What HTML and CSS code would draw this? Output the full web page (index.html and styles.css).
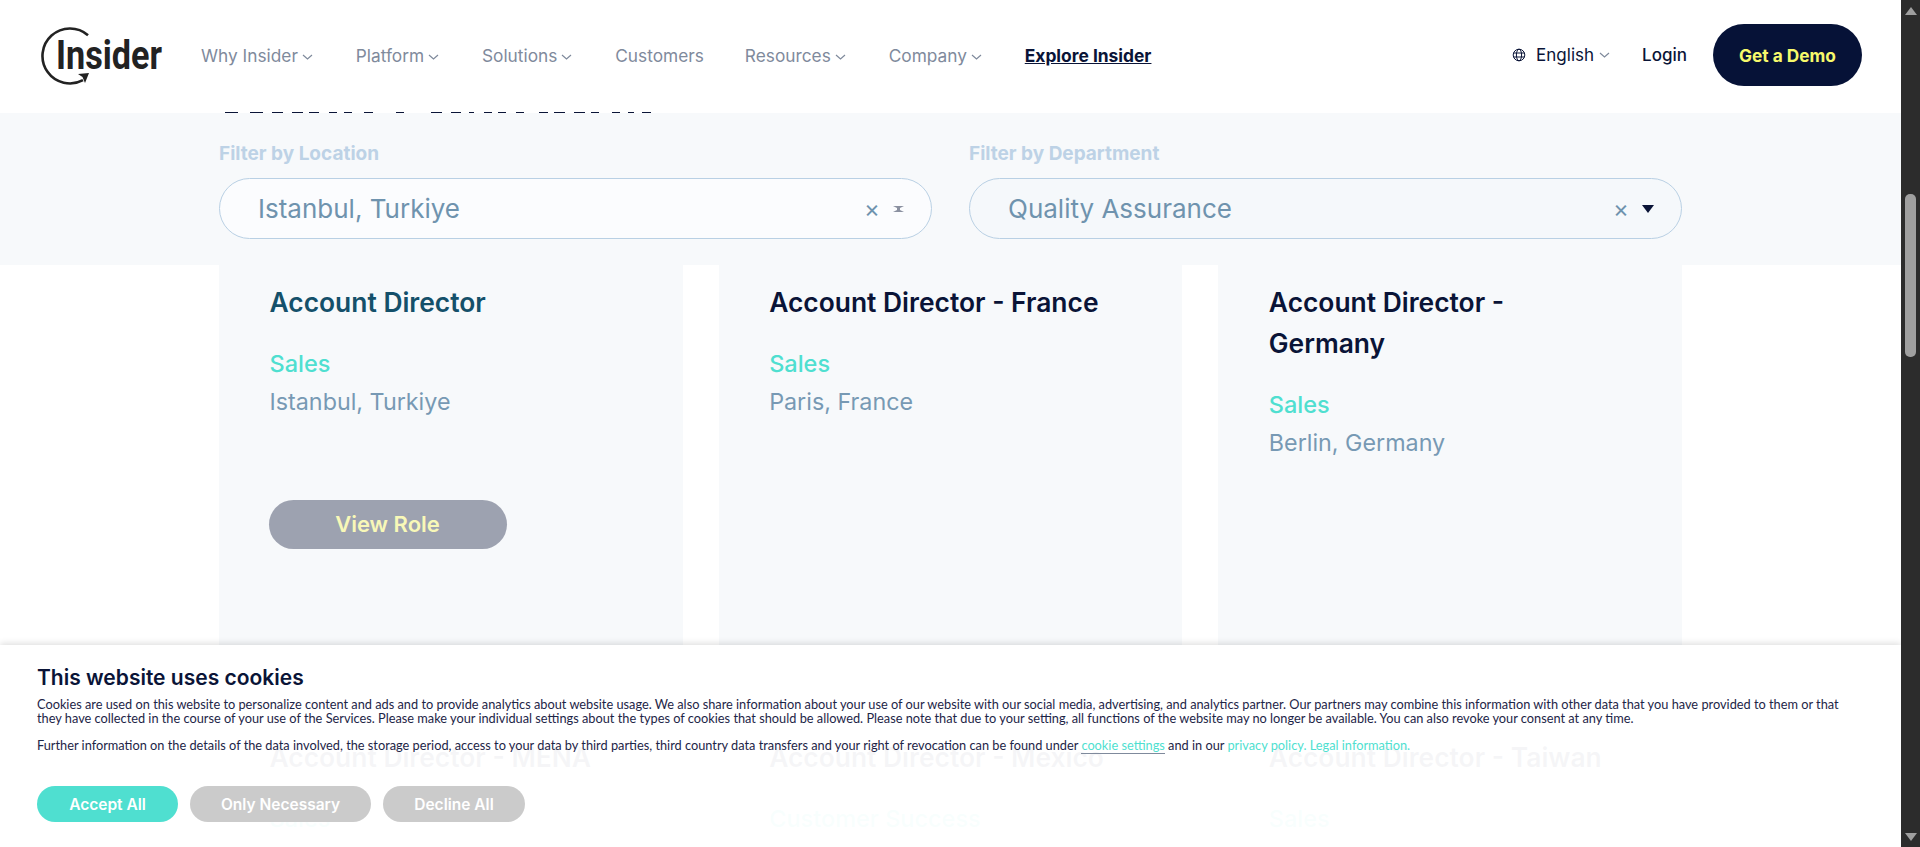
FILE: index.html
```html
<!DOCTYPE html>
<html lang="en">
<head>
  <meta charset="UTF-8">
  <title>Insider Careers - Open Positions</title>
  <link rel="stylesheet" href="styles.css">
</head>
<body>
  <div class="window">
    <div class="page">

      <header class="site-header">
        <div class="header-row">
          <a class="logo" href="#">
            <svg width="122" height="60" viewBox="0 0 122 60">
              <path d="M47 10.200A27.500 27.500 0 1 0 42 55.200" fill="none" stroke="#222" stroke-width="2.6"/>
              <path d="M37 49L48 48L44 58L41.500 52Z" fill="#222"/>
              <text class="logo-text" x="15" y="44" textLength="106" lengthAdjust="spacingAndGlyphs">Insider</text>
            </svg>
          </a>
          <nav class="main-nav">
            <a href="#">Why Insider <svg class="chev" width="11" height="6" viewBox="0 0 11 6"><path d="M1 1l4.500 4 4.500-4"/></svg></a>
            <a href="#">Platform <svg class="chev" width="11" height="6" viewBox="0 0 11 6"><path d="M1 1l4.500 4 4.500-4"/></svg></a>
            <a href="#">Solutions <svg class="chev" width="11" height="6" viewBox="0 0 11 6"><path d="M1 1l4.500 4 4.500-4"/></svg></a>
            <a href="#">Customers</a>
            <a href="#">Resources <svg class="chev" width="11" height="6" viewBox="0 0 11 6"><path d="M1 1l4.500 4 4.500-4"/></svg></a>
            <a href="#">Company <svg class="chev" width="11" height="6" viewBox="0 0 11 6"><path d="M1 1l4.500 4 4.500-4"/></svg></a>
            <a href="#" class="explore">Explore Insider</a>
          </nav>
          <div class="header-right">
            <a href="#" class="lang">
              <svg width="14" height="14" viewBox="0 0 14 14" class="globe">
                <circle cx="7" cy="7" r="5.800"/>
                <ellipse cx="7" cy="7" rx="2.600" ry="5.800"/>
                <path d="M1.500 5h11M1.500 9h11"/>
              </svg>
              <span>English</span>
              <svg class="chev" width="11" height="6" viewBox="0 0 11 6"><path d="M1 1l4.500 4 4.500-4"/></svg>
            </a>
            <a href="#" class="login">Login</a>
            <a href="#" class="demo">Get a Demo</a>
          </div>
        </div>
        <!-- bottom edge of the page heading, scrolled away under the header -->
        <svg class="title-edge" width="426" height="3" viewBox="0 0 426 3">
          <path d="M0 2.500h13M25 2.500h13M47 2.500h11M67 2.500h11M84 2.500h10M104 2.500h8M119 2.500h8M139 2.500h9M171 2.500h8M206 2.500h11M226 2.500h10M244 2.500h5M259 2.500h8M273 2.500h8M291 2.500h8M314 2.500h9M329 2.500h11M349 2.500h11M366 2.500h8M387 2.500h8M403 2.500h6M417 2.500h9"/>
        </svg>
      </header>

      <section class="filters">
        <div class="filter">
          <label>Filter by Location</label>
          <div class="select select-hover">
            <span class="select-value">Istanbul, Turkiye</span>
            <span class="select-clear">×</span>
            <svg class="select-sort" width="11" height="6" viewBox="0 0 11 6"><path d="M0 0h11L7 2v2l4 2H0l4-2V2z"/></svg>
          </div>
        </div>
        <div class="filter">
          <label>Filter by Department</label>
          <div class="select">
            <span class="select-value">Quality Assurance</span>
            <span class="select-clear">×</span>
            <svg class="select-arrow" width="12" height="8" viewBox="0 0 12 8"><path d="M0 0h12L6 8z"/></svg>
          </div>
        </div>
      </section>

      <section class="jobs">
        <article class="job job-hover">
          <h3>Account Director</h3>
          <p class="dept">Sales</p>
          <p class="place">Istanbul, Turkiye</p>
          <a href="#" class="view-role">View Role</a>
        </article>
        <article class="job">
          <h3>Account Director - France</h3>
          <p class="dept">Sales</p>
          <p class="place">Paris, France</p>
        </article>
        <article class="job">
          <h3>Account Director - Germany</h3>
          <p class="dept">Sales</p>
          <p class="place">Berlin, Germany</p>
        </article>
        <article class="job">
          <h3>Account Director - MENA</h3>
          <p class="dept">Sales</p>
          <p class="place">Dubai, UAE</p>
        </article>
        <article class="job">
          <h3>Account Director - Mexico</h3>
          <p class="dept">Customer Success</p>
          <p class="place">Mexico City, Mexico</p>
        </article>
        <article class="job">
          <h3>Account Director - Taiwan</h3>
          <p class="dept">Sales</p>
          <p class="place">Taipei, Taiwan</p>
        </article>
      </section>

      <div class="cookie-banner">
        <h4>This website uses cookies</h4>
        <p>Cookies are used on this website to personalize content and ads and to provide analytics about website usage. We also share information about your use of our website with our social media, advertising, and analytics partner. Our partners may combine this information with other data that you have provided to them or that they have collected in the course of your use of the Services. Please make your individual settings about the types of cookies that should be allowed. Please note that due to your setting, all functions of the website may no longer be available. You can also revoke your consent at any time.</p>
        <p>Further information on the details of the data involved, the storage period, access to your data by third parties, third country data transfers and your right of revocation can be found under <a href="#" class="cookie-settings">cookie settings</a> and in our <a href="#">privacy policy.</a> <a href="#">Legal information.</a></p>
        <div class="cookie-buttons">
          <button class="btn-accept">Accept All</button>
          <button class="btn-grey">Only Necessary</button>
          <button class="btn-grey">Decline All</button>
        </div>
      </div>

    </div>

    <aside class="scrollbar">
      <svg width="12" height="8" viewBox="0 0 12 8"><path d="M6 0l6 8H0z"/></svg>
      <div class="scroll-track"><div class="scroll-thumb"></div></div>
      <svg width="12" height="8" viewBox="0 0 12 8"><path d="M0 0h12L6 8z"/></svg>
    </aside>
  </div>
</body>
</html>
```

FILE: styles.css
```css
/* ========== base ========== */
html, body {
  margin: 0;
  padding: 0;
  height: 100%;
  overflow: hidden;
}
body {
  font-family: Inter, "Liberation Sans", sans-serif;
  background: #fff;
  color: #0a1437;
}
a {
  text-decoration: none;
  color: inherit;
}
.window {
  display: flex;
  height: 847px;
}
.page {
  position: relative;
  flex: 1;
  min-width: 0;
  overflow: hidden;
}

/* ========== scrollbar ========== */
.scrollbar {
  width: 19px;
  background: #2c2c2c;
  display: flex;
  flex-direction: column;
  align-items: center;
  padding: 7px 0 6px;
  box-sizing: border-box;
}
.scrollbar svg {
  fill: #9f9f9f;
  flex: none;
}
.scroll-track {
  flex: 1;
  padding-top: 179px;
}
.scroll-thumb {
  width: 11px;
  height: 163px;
  background: #9f9f9f;
  border-radius: 5px;
}

/* ========== header ========== */
.site-header {
  background: #fff;
  height: 113px;
}
.header-row {
  display: flex;
  align-items: center;
  height: 110px;
  padding: 0 39px 0 41px;
}
.logo {
  display: block;
  height: 60px;
  margin-right: 38px;
}
.logo-text {
  font-family: Roboto, sans-serif;
  font-size: 41px;
  font-weight: 700;
  fill: #222;
}
.main-nav {
  display: flex;
  align-items: center;
  gap: 41px;
  padding-top: 1px;
}
.main-nav a {
  font-size: 17.3px;
  color: #7f8a9c;
  white-space: nowrap;
}
.main-nav a.explore {
  color: #0a1437;
  font-weight: 700;
  font-size: 17.4px;
  text-decoration: underline;
}
.chev {
  fill: none;
  stroke: #7f8a9c;
  stroke-width: 1.2;
  margin: 0 2px 0 -1px;
  vertical-align: 2px;
}
.header-right {
  margin-left: auto;
  display: flex;
  align-items: center;
}
.lang {
  display: flex;
  align-items: center;
  font-size: 17px;
  margin-right: 32px;
}
.globe {
  fill: none;
  stroke: #0a1437;
  stroke-width: 1;
  margin-right: 10px;
}
.lang .chev {
  margin: 0 0 0 5px;
}
.login {
  font-size: 17px;
  font-weight: 500;
  margin-right: 26px;
}
.demo {
  display: block;
  width: 149px;
  height: 62px;
  line-height: 64px;
  text-align: center;
  border-radius: 31px;
  background: #061237;
  color: #f6f96b;
  font-size: 17.3px;
  font-weight: 700;
}
.title-edge {
  display: block;
  margin-left: 225px;
  fill: none;
  stroke: #0a1437;
  stroke-width: 1;
}

/* ========== filters ========== */
.filters {
  background: #f7f9fb;
  height: 152px;
  box-sizing: border-box;
  padding: 27px 219px 0;
  display: grid;
  grid-template-columns: 1fr 1fr;
  column-gap: 37px;
}
.filter label {
  display: block;
  font-size: 19px;
  font-weight: 700;
  line-height: 27px;
  color: #bdd2e6;
  margin-bottom: 11px;
}
.select {
  display: flex;
  align-items: center;
  height: 61px;
  box-sizing: border-box;
  border: 1px solid #b9d0e4;
  border-radius: 31px;
  padding: 0 27px 0 38px;
  background: #f5f8fb;
  color: #6f93ae;
}
.select-hover {
  background: #fbfcfe;
}
.select-value {
  flex: 1;
  font-size: 26px;
}
.select-clear {
  font-size: 24px;
  margin-right: 13px;
}
.select-sort {
  fill: #8a90a0;
}
.select-arrow {
  fill: #0a1437;
}

/* ========== job cards ========== */
.jobs {
  display: grid;
  grid-template-columns: repeat(3, 1fr);
  gap: 36px;
  width: 1463px;
  margin: 0 auto;
}
.job {
  height: 419px;
  box-sizing: border-box;
  background: #f7f9fb;
  padding: 17px 58px 0 50.5px;
}
.job h3 {
  margin: 0 0 20px;
  font-size: 26.4px;
  font-weight: 600;
  line-height: 41px;
  color: #0a1437;
}
.job-hover h3 {
  color: #14506a;
}
.dept {
  margin: 0;
  font-size: 23.5px;
  font-weight: 500;
  line-height: 41px;
  color: #4fdfd0;
}
.place {
  margin: 0;
  font-size: 23.3px;
  line-height: 36px;
  color: #7799b4;
}
.view-role {
  display: block;
  width: 238px;
  height: 49px;
  line-height: 49px;
  margin: 80px 0 0 -1px;
  text-align: center;
  border-radius: 25px;
  background: #9da2b0;
  color: #f8f8b8;
  font-size: 22px;
  font-weight: 600;
}

/* ========== cookie banner ========== */
.cookie-banner {
  position: absolute;
  left: 0;
  right: 0;
  bottom: 0;
  height: 202px;
  box-sizing: border-box;
  padding: 19px 50px 0 37px;
  background: rgba(255, 255, 255, 0.96);
  box-shadow: 0 -2px 6px rgba(0, 0, 0, 0.12);
}
.cookie-banner h4 {
  margin: 0 0 5px;
  font-size: 21px;
  font-weight: 600;
  line-height: 28px;
  color: #0a1437;
}
.cookie-banner p {
  margin: 0 0 13px;
  font-family: Lato, sans-serif;
  font-size: 12.78px;
  line-height: 14px;
  color: #1d2547;
}
.cookie-banner p a {
  color: #4fdfd0;
}
.cookie-settings {
  border-bottom: 1px solid #7f8a9c;
}
.cookie-buttons {
  display: flex;
  gap: 12px;
  margin-top: 34px;
}
.cookie-buttons button {
  height: 36px;
  border: none;
  border-radius: 18px;
  color: #fff;
  font-family: inherit;
  font-size: 15.5px;
  font-weight: 600;
  padding: 0;
}
.btn-accept {
  width: 141px;
  background: #4fdfd0;
}
.btn-grey {
  width: 181px;
  background: #cbcbcb;
}
.btn-grey:last-child {
  width: 142px;
}
```
